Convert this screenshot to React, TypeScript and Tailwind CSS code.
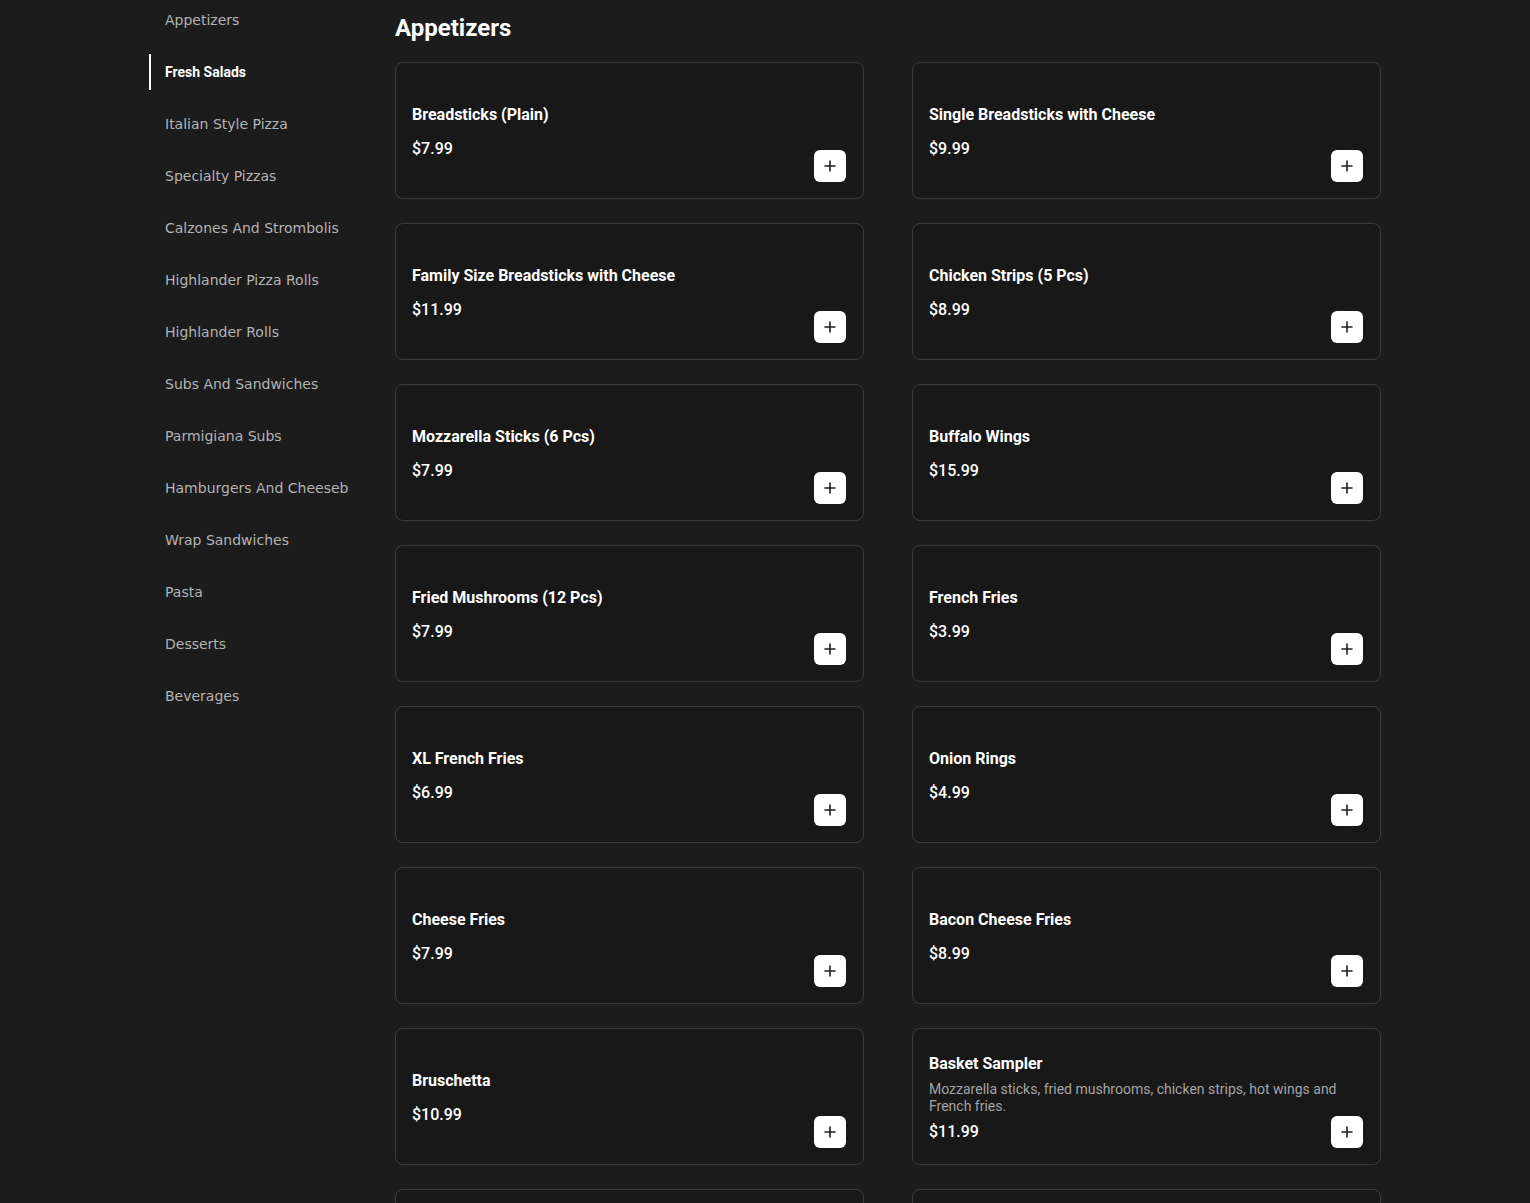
import React from "react";

const cats = [
  "Appetizers",
  "Fresh Salads",
  "Italian Style Pizza",
  "Specialty Pizzas",
  "Calzones And Strombolis",
  "Highlander Pizza Rolls",
  "Highlander Rolls",
  "Subs And Sandwiches",
  "Parmigiana Subs",
  "Hamburgers And Cheeseburgers",
  "Wrap Sandwiches",
  "Pasta",
  "Desserts",
  "Beverages",
];

type Item = { name: string; price: string; desc?: string };

const items: Item[] = [
  { name: "Breadsticks (Plain)", price: "$7.99" },
  { name: "Single Breadsticks with Cheese", price: "$9.99" },
  { name: "Family Size Breadsticks with Cheese", price: "$11.99" },
  { name: "Chicken Strips (5 Pcs)", price: "$8.99" },
  { name: "Mozzarella Sticks (6 Pcs)", price: "$7.99" },
  { name: "Buffalo Wings", price: "$15.99" },
  { name: "Fried Mushrooms (12 Pcs)", price: "$7.99" },
  { name: "French Fries", price: "$3.99" },
  { name: "XL French Fries", price: "$6.99" },
  { name: "Onion Rings", price: "$4.99" },
  { name: "Cheese Fries", price: "$7.99" },
  { name: "Bacon Cheese Fries", price: "$8.99" },
  { name: "Bruschetta", price: "$10.99" },
  {
    name: "Basket Sampler",
    price: "$11.99",
    desc: "Mozzarella sticks, fried mushrooms, chicken strips, hot wings and French fries.",
  },
  { name: "Garlic Knots", price: "$5.99" },
  { name: "Jalapeno Poppers", price: "$7.99" },
];

function PlusIcon() {
  return (
    <svg width="12" height="12" viewBox="0 0 12 12" fill="none">
      <path d="M6 1v10M1 6h10" stroke="#1f1f1f" strokeWidth="1.6" strokeLinecap="round" />
    </svg>
  );
}

function Card({ item }: { item: Item }) {
  return (
    <div className="relative h-[137px] rounded-lg border border-[#3a3a3a] bg-[#181818] px-4 flex items-center">
      <div className="flex flex-col w-full pt-[2px]">
        <div className="text-[16px] leading-6 font-bold text-white">{item.name}</div>
        {item.desc ? (
          <div className="mt-[5px] text-[14px] leading-[17px] text-[#a3a3a3]">{item.desc}</div>
        ) : null}
        <div className={(item.desc ? "mt-[5px]" : "mt-[10px]") + " text-[16px] leading-6 font-medium text-white"}>
          {item.price}
        </div>
      </div>
      <button className="absolute right-[17px] bottom-4 w-8 h-8 rounded-md bg-white flex items-center justify-center">
        <PlusIcon />
      </button>
    </div>
  );
}

export default function App() {
  return (
    <div className="min-h-screen bg-[#1c1c1c]" style={{ fontFamily: "Roboto, 'Noto Sans', sans-serif" }}>
      <div className="w-[1232px] mx-auto flex h-[1203px] overflow-hidden">
        <aside className="w-[200px] shrink-0 pt-[2px] flex flex-col gap-4">
          {cats.map((c, i) =>
            i === 1 ? (
              <div
                key={c}
                className="h-9 flex items-center pl-[14px] border-l-2 border-white text-[14px] font-bold text-white whitespace-nowrap overflow-hidden"
                style={{ fontFamily: "Roboto, sans-serif" }}
              >
                {c}
              </div>
            ) : (
              <div
                key={c}
                className="h-9 flex items-center pl-4 text-[14px] text-[#b3b3b3] whitespace-nowrap overflow-hidden"
                style={{ fontFamily: "'DejaVu Sans', sans-serif" }}
              >
                {c}
              </div>
            )
          )}
        </aside>
        <main className="ml-[46px] w-[986px] pt-3">
          <h2 className="text-[24px] leading-8 font-bold text-white mb-[18px]">Appetizers</h2>
          <div className="grid grid-cols-2 gap-x-12 gap-y-6">
            {items.map((it) => (
              <Card key={it.name} item={it} />
            ))}
          </div>
        </main>
      </div>
    </div>
  );
}
